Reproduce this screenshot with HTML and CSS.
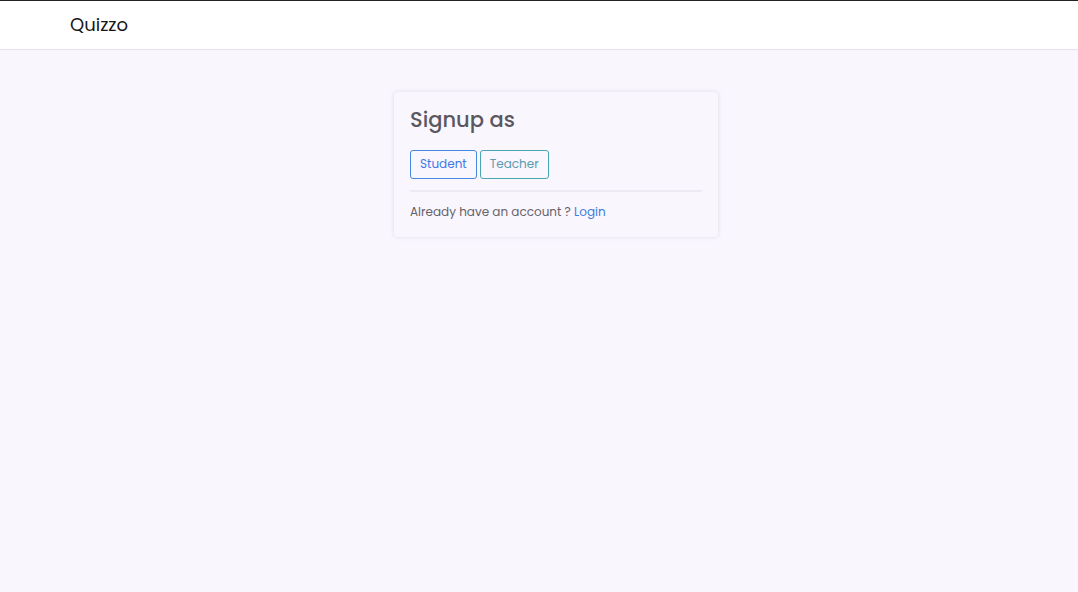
FILE: index.html
```html
<!DOCTYPE html>
<html lang="en">
<head>
  <meta charset="utf-8">
  <meta name="viewport" content="width=device-width, initial-scale=1">
  <title>Quizzo</title>
  <link rel="stylesheet" href="styles.css">
</head>
<body>
  <header class="navbar">
    <a class="brand" href="#">Quizzo</a>
  </header>
  <main class="page">
    <section class="card">
      <h1 class="card-title">Signup as</h1>
      <div class="actions">
        <button class="btn btn-student" type="button">Student</button>
        <button class="btn btn-teacher" type="button">Teacher</button>
      </div>
      <hr class="divider">
      <p class="note">Already have an account ? <a class="link" href="#">Login</a></p>
    </section>
  </main>
</body>
</html>
```

FILE: styles.css
```css
* {
  box-sizing: border-box;
}

body {
  margin: 0;
  min-height: 100vh;
  background: #f9f6fe;
  color: #66636b;
  font-family: Poppins, Inter, "Open Sans", sans-serif;
  font-size: 12px;
  line-height: 20px;
}

.navbar {
  padding: 10px 36px 10px 70px;
  background: #fff;
  border-top: 1px solid #222;
  border-bottom: 1px solid #e6e1ea;
}

.brand {
  display: inline-block;
  color: #161618;
  font-size: 18px;
  line-height: 28px;
  text-decoration: none;
}

.page {
  display: grid;
  grid-template-columns: repeat(3, 1fr);
  padding: 42px 36px 42px 70px;
}

.card {
  grid-column: 2;
  padding: 15px 16px;
  border-radius: 4px;
  box-shadow: 0 0 4px #dfdbe5;
}

.card-title {
  margin: 0 0 17px;
  color: #5a585e;
  font-size: 21px;
  font-weight: 500;
  line-height: 26px;
}

.actions {
  display: flex;
  gap: 3px;
}

.btn {
  padding: 2px 9px 4px;
  border: 1px solid;
  border-radius: 3px;
  background: transparent;
  font: inherit;
  line-height: 21px;
  cursor: pointer;
}

.btn-student {
  border-color: #4389e4;
  color: #4079e6;
}

.btn-teacher {
  border-color: #48a5b4;
  color: #5a9bb0;
}

.divider {
  margin: 11px 0 10px;
  border: 0;
  border-top: 2px solid #eeeaf3;
}

.note {
  margin: 0;
}

.link {
  color: #3c7de0;
  text-decoration: none;
}
```
